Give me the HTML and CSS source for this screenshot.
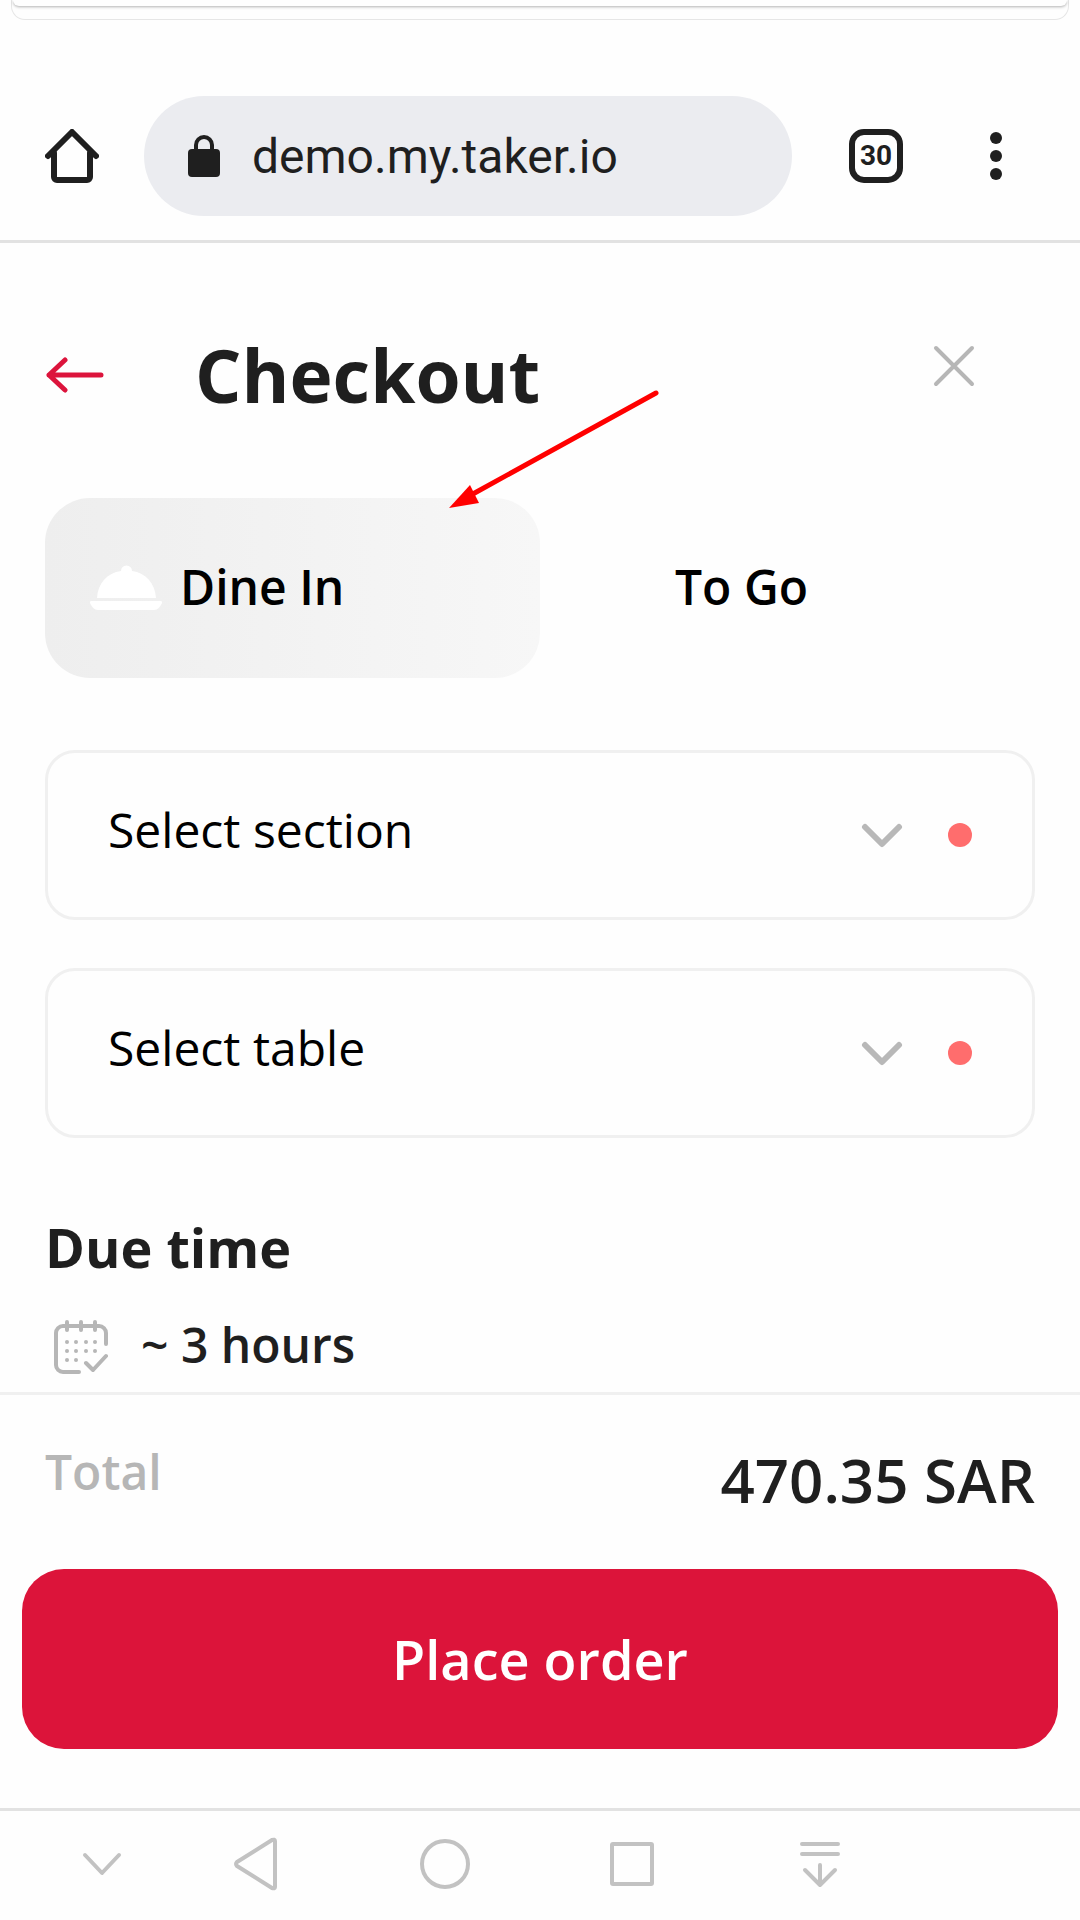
FILE: index.html
```html
<!DOCTYPE html>
<html lang="en">
<head>
    <meta charset="UTF-8">
    <meta name="viewport" content="width=device-width, initial-scale=1.0">
    <title>Checkout</title>
    <link rel="stylesheet" href="styles.css">
</head>
<body>
    <div class="sheet"><div class="sheet-inner"></div></div>

    <header class="browser-bar">
        <button class="icon-btn" aria-label="Home">
            <svg width="54" height="54" viewBox="0 0 54 54" fill="none" stroke="#1f1f1f" stroke-width="6" stroke-linecap="round" stroke-linejoin="round">
                <path d="M3 27 27 3l24 24"/>
                <path d="M9 24v24a3 3 0 0 0 3 3h30a3 3 0 0 0 3-3V24"/>
            </svg>
        </button>
        <div class="address">
            <svg width="32" height="42" viewBox="0 0 32 42">
                <rect y="14" width="32" height="28" rx="4" fill="#1f1f1f"/>
                <path d="M8 16v-6a8 8 0 0 1 16 0v6" fill="none" stroke="#1f1f1f" stroke-width="4"/>
            </svg>
            <input class="address-input" type="text" value="demo.my.taker.io" aria-label="Address">
        </div>
        <button class="tab-count" aria-label="30 open tabs">30</button>
        <button class="icon-btn" aria-label="More">
            <svg width="12" height="48" viewBox="0 0 12 48" fill="#1f1f1f">
                <circle cx="6" cy="6" r="6"/>
                <circle cx="6" cy="24" r="6"/>
                <circle cx="6" cy="42" r="6"/>
            </svg>
        </button>
    </header>

    <main class="checkout">
        <div class="title-row">
            <button class="icon-btn" aria-label="Back">
                <svg width="60" height="36" viewBox="0 0 60 36" fill="none" stroke="#dc143c" stroke-width="5" stroke-linecap="round" stroke-linejoin="round">
                    <path d="M20 3 4 18l16 15M4 18h52"/>
                </svg>
            </button>
            <h1>Checkout</h1>
            <button class="icon-btn close" aria-label="Close">
                <svg width="42" height="42" viewBox="0 0 42 42" fill="none" stroke="#b6b6b6" stroke-width="4" stroke-linecap="round">
                    <path d="M3 3l36 36M39 3 3 39"/>
                </svg>
            </button>
        </div>

        <div class="order-type">
            <button class="type-btn active">
                <svg width="72" height="48" viewBox="0 0 72 48" fill="#fff">
                    <path d="M7 35C8 20 17 10 31 8a5 5 0 1 1 11 0c14 2 23 12 24 27z"/>
                    <path d="M1 38h70c1 0 1 1 1 2-2 4-4 7-8 7H8c-4 0-6-3-8-7 0-1 0-2 1-2z"/>
                </svg>
                Dine In
            </button>
            <button class="type-btn">
                <svg width="72" height="48" viewBox="0 0 72 48"></svg>
                To Go
            </button>
        </div>

        <div class="fields">
            <div class="field">
                <select aria-label="Section">
                    <option>Select section</option>
                </select>
                <svg width="42" height="26" viewBox="0 0 42 26" fill="none" stroke="#b8b8b8" stroke-width="6" stroke-linecap="round" stroke-linejoin="round">
                    <path d="M4 5l17 17L38 5"/>
                </svg>
                <span class="required"></span>
            </div>
            <div class="field">
                <select aria-label="Table">
                    <option>Select table</option>
                </select>
                <svg width="42" height="26" viewBox="0 0 42 26" fill="none" stroke="#b8b8b8" stroke-width="6" stroke-linecap="round" stroke-linejoin="round">
                    <path d="M4 5l17 17L38 5"/>
                </svg>
                <span class="required"></span>
            </div>
        </div>

        <h2>Due time</h2>
        <div class="due">
            <svg width="54" height="58" viewBox="0 -4 54 58" fill="none" stroke="#b6b6b6" stroke-width="4" stroke-linecap="round" stroke-linejoin="round">
                <path d="M52 24V13a7 7 0 0 0-7-7H9a7 7 0 0 0-7 7v32a7 7 0 0 0 7 7h16"/>
                <path d="M13 2v8M27 2v8M41 2v8"/>
                <path d="M32 43l7 7 13-14"/>
                <g fill="#b6b6b6" stroke="none">
                    <circle cx="13" cy="22" r="2"/><circle cx="22" cy="22" r="2"/><circle cx="32" cy="22" r="2"/><circle cx="41" cy="22" r="2"/>
                    <circle cx="13" cy="31" r="2"/><circle cx="22" cy="31" r="2"/><circle cx="32" cy="31" r="2"/><circle cx="41" cy="31" r="2"/>
                    <circle cx="13" cy="40" r="2"/><circle cx="22" cy="40" r="2"/>
                </g>
            </svg>
            <span>~ 3 hours</span>
        </div>

        <svg class="pointer" width="216" height="124" viewBox="0 0 216 124">
            <path d="M207 7 22 109" stroke="#f00" stroke-width="5" stroke-linecap="round"/>
            <path d="M0 122 21 99 30 117z" fill="#f00"/>
        </svg>
    </main>

    <section class="summary">
        <div class="total">
            <span class="total-label">Total</span>
            <span class="total-value">470.35 SAR</span>
        </div>
        <button class="place-order">Place order</button>
    </section>

    <nav class="system-nav">
        <button class="icon-btn" aria-label="Hide navigation">
            <svg width="54" height="54" viewBox="0 0 54 54"><path d="M10 18l17 18 17-18"/></svg>
        </button>
        <button class="icon-btn" aria-label="Back">
            <svg width="54" height="54" viewBox="0 0 54 54"><path d="M45 4v46q0 2-3 1L7 29q-2-2 0-4L42 3q3-1 3 1z"/></svg>
        </button>
        <button class="icon-btn" aria-label="Home">
            <svg width="54" height="54" viewBox="0 0 54 54"><circle cx="27" cy="27" r="23"/></svg>
        </button>
        <button class="icon-btn" aria-label="Recent apps">
            <svg width="54" height="54" viewBox="0 0 54 54"><rect x="7" y="7" width="40" height="40" rx="1"/></svg>
        </button>
        <button class="icon-btn" aria-label="Pull down">
            <svg width="54" height="54" viewBox="0 0 54 54"><path d="M9 7h36M9 17h36M27 28v19M12 33l15 15 15-15"/></svg>
        </button>
    </nav>
</body>
</html>
```

FILE: styles.css
```css
* {
    margin: 0;
    padding: 0;
    box-sizing: border-box;
}

body {
    background: #fefefe;
    color: #1f1f1f;
    min-height: 100vh;
    display: flex;
    flex-direction: column;
    font-family: 'Open Sans', 'Noto Sans', sans-serif;
    font-size: 48px;
}

button,
input,
select {
    font: inherit;
    color: inherit;
    background: none;
    border: none;
}

button {
    cursor: pointer;
}

svg {
    display: block;
    flex-shrink: 0;
}

/* bottom edge of the card above the browser */
.sheet {
    height: 20px;
    margin: 0 11px;
    border: 1px solid #e6e6e6;
    border-top: none;
    border-radius: 0 0 14px 14px;
}

.sheet-inner {
    height: 6px;
    margin: 0 1px;
    border-radius: 0 0 10px 10px;
    box-shadow: 0 1px 3px rgba(0, 0, 0, 0.3);
}

.browser-bar {
    display: flex;
    align-items: center;
    padding: 76px 78px 24px 45px;
    border-bottom: 3px solid #e2e2e2;
}

.address {
    flex: 1;
    min-width: 0;
    display: flex;
    align-items: center;
    gap: 32px;
    height: 120px;
    margin: 0 57px 0 45px;
    padding: 0 44px;
    border-radius: 60px;
    background: #ebecf0;
}

.address-input {
    flex: 1;
    min-width: 0;
    font-family: Roboto, sans-serif;
}

.tab-count {
    flex-shrink: 0;
    width: 54px;
    height: 54px;
    margin-right: 87px;
    border: 6px solid #1f1f1f;
    border-radius: 15px;
    font-family: Roboto, sans-serif;
    font-size: 28px;
    font-weight: bold;
    line-height: 42px;
}

.checkout {
    position: relative;
    flex: 1;
    padding: 82px 45px 15px;
}

.title-row {
    display: flex;
    align-items: center;
    margin-bottom: 74px;
}

h1 {
    flex: 1;
    margin-left: 90px;
    font-size: 73px;
    font-weight: bold;
    line-height: 99px;
}

.close {
    margin: 0 60px 18px 0;
}

.order-type {
    display: grid;
    grid-template-columns: 1fr 1fr;
    margin-bottom: 72px;
}

.type-btn {
    display: flex;
    align-items: center;
    gap: 18px;
    height: 180px;
    padding: 0 45px 3px;
    border-radius: 45px;
    color: #000;
    font-weight: 600;
}

.type-btn.active {
    background: linear-gradient(90deg, #eeeeee, #f7f7f7);
}

.fields {
    display: grid;
    gap: 48px;
    margin-bottom: 72px;
}

.field {
    display: flex;
    align-items: center;
    height: 170px;
    padding-right: 60px;
    border: 3px solid #f0f0f0;
    border-radius: 30px;
}

.field select {
    flex: 1;
    height: 100%;
    padding: 0 0 12px 60px;
    color: #000;
    appearance: none;
}

.required {
    width: 24px;
    height: 24px;
    margin-left: 45px;
    border-radius: 50%;
    background: #ff6d6d;
}

h2 {
    margin-bottom: 28px;
    font-size: 54px;
    font-weight: bold;
}

.due {
    display: flex;
    align-items: center;
    gap: 33px;
    padding-left: 9px;
    font-weight: 600;
}

/* arrow drawn over the order type */
.pointer {
    position: absolute;
    top: 143px;
    left: 449px;
    pointer-events: none;
}

.summary {
    padding: 44px 22px 59px;
    border-top: 3px solid #f0f0f0;
}

.total {
    display: flex;
    justify-content: space-between;
    align-items: flex-start;
    margin: 0 23px 48px;
    font-weight: 600;
}

.total-label {
    color: #b6b6b6;
}

.total-value {
    font-size: 60px;
}

.place-order {
    width: 100%;
    height: 180px;
    border-radius: 42px;
    background: #dc143a;
    color: #fff;
    font-size: 54px;
    font-weight: 600;
}

.system-nav {
    display: grid;
    grid-template-columns: 122px repeat(4, 1fr);
    justify-items: center;
    align-items: center;
    height: 112px;
    padding: 0 166px 4px 41px;
    border-top: 3px solid #e2e2e2;
}

.system-nav svg {
    fill: none;
    stroke: #c2c2c2;
    stroke-width: 4;
    stroke-linecap: round;
    stroke-linejoin: round;
}
```
